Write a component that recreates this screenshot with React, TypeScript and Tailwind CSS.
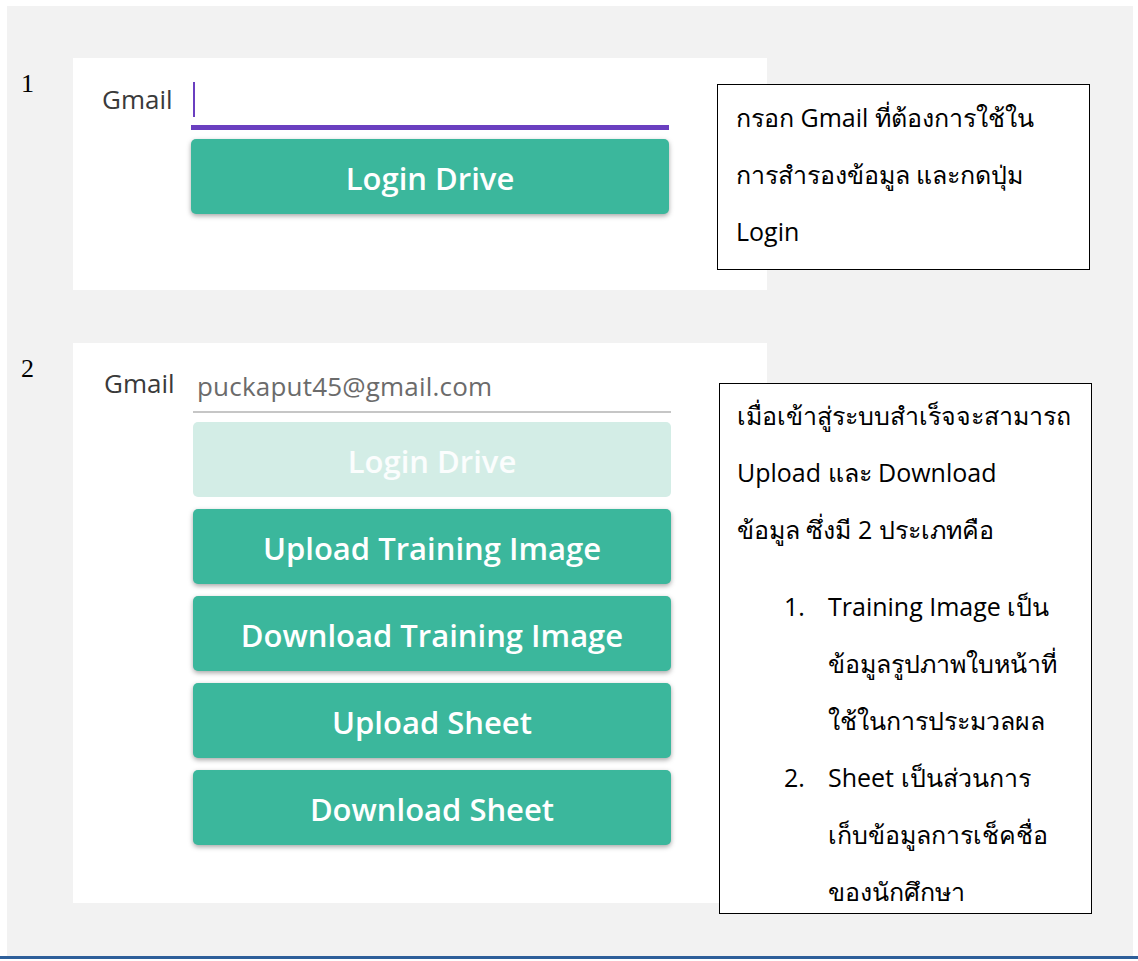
import React from "react";

const btnFont = { fontFamily: '"Open Sans", "Noto Sans", sans-serif' };

const TealButton = ({ label, disabled }: { label: string; disabled?: boolean }) => (
  <div
    className={
      disabled
        ? "h-[75px] w-full rounded-[5px] bg-[#d3ede6] flex items-center justify-center pt-[3px] text-[31px] font-semibold text-white/90"
        : "h-[75px] w-full rounded-[5px] bg-[#3bb79c] flex items-center justify-center pt-[3px] text-[31px] font-semibold text-white shadow-[0_2px_5px_rgba(0,0,0,0.35)]"
    }
    style={btnFont}
  >
    {label}
  </div>
);

const Num = ({ n }: { n: string }) => (
  <div className="w-[66px] pl-[14px] pt-[10px] text-[26px] leading-[32px] text-black font-['Liberation_Serif',serif]">
    {n}
  </div>
);

export default function App() {
  return (
    <div className="w-[1138px] h-[961px] bg-white font-['Open_Sans','Noto_Sans',sans-serif]">
      <div className="ml-[7px] pt-[6px]">
        <div className="relative w-[1126px] h-[950px] bg-[#f2f2f2] pt-[52px]">
          {/* step 1 */}
          <div className="flex">
            <Num n="1" />
            <div className="w-[694px] h-[232px] bg-white flex pt-[22px]">
              <div className="w-[118px] pl-[29px] pt-[1px] text-[26px] leading-[36px] text-[#3a3a3a]">Gmail</div>
              <div className="w-[478px] flex flex-col">
                <div className="h-[50px] border-b-[5px] border-[#6a3fc0] pt-[2px]">
                  <div className="ml-[2px] w-[2px] h-[35px] bg-[#6a3fc0]" />
                </div>
                <div className="mt-[9px]">
                  <TealButton label="Login Drive" />
                </div>
              </div>
            </div>
          </div>

          {/* step 2 */}
          <div className="flex mt-[53px]">
            <Num n="2" />
            <div className="w-[694px] h-[560px] bg-white flex pt-[22px]">
              <div className="w-[120px] pl-[31px] pt-[0px] text-[26px] leading-[36px] text-[#3a3a3a]">Gmail</div>
              <div className="w-[478px] flex flex-col">
                <div className="h-[48px] border-b-2 border-[#c6c6c6] pl-[4px] pt-[2px] text-[26px] leading-[38px] tracking-[0.2px] text-[#6b6b6b]">
                  puckaput45@gmail.com
                </div>
                <div className="mt-[9px] flex flex-col gap-[12px]">
                  <TealButton label="Login Drive" disabled />
                  <TealButton label="Upload Training Image" />
                  <TealButton label="Download Training Image" />
                  <TealButton label="Upload Sheet" />
                  <TealButton label="Download Sheet" />
                </div>
              </div>
            </div>
          </div>

          {/* callouts */}
          <div className="absolute left-[710px] top-[78px] w-[373px] h-[186px] border border-black bg-white pl-[18px] pt-[4px] text-[25px] leading-[57px] text-black">
            <div>กรอก Gmail ที่ต้องการใช้ใน</div>
            <div>การสำรองข้อมูล และกดปุ่ม</div>
            <div>Login</div>
          </div>
          <div className="absolute left-[712px] top-[377px] w-[373px] h-[531px] border border-black bg-white pl-[17px] pt-[3px] text-[25px] leading-[57px] text-black">
            <div>เมื่อเข้าสู่ระบบสำเร็จจะสามารถ</div>
            <div>Upload และ Download</div>
            <div>ข้อมูล ซึ่งมี 2 ประเภทคือ</div>
            <div className="mt-[20px] flex">
              <div className="w-[91px] pl-[47px]">1.</div>
              <div>
                <div>Training Image เป็น</div>
                <div>ข้อมูลรูปภาพใบหน้าที่</div>
                <div>ใช้ในการประมวลผล</div>
              </div>
            </div>
            <div className="flex">
              <div className="w-[91px] pl-[47px]">2.</div>
              <div>
                <div>Sheet เป็นส่วนการ</div>
                <div>เก็บข้อมูลการเช็คชื่อ</div>
                <div>ของนักศึกษา</div>
              </div>
            </div>
          </div>
        </div>
        <div className="-ml-[7px] w-[1138px] h-[3px] bg-[#2e5f9a]" />
      </div>
    </div>
  );
}
